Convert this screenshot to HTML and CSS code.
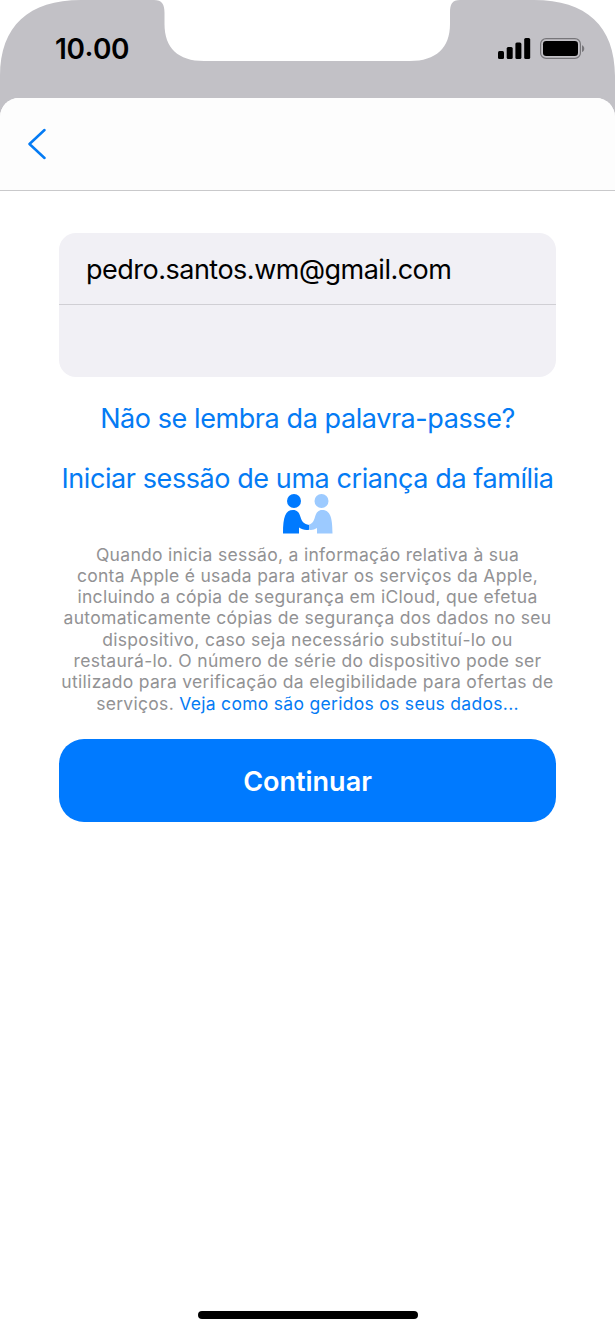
FILE: index.html
```html
<!DOCTYPE html>
<html lang="pt">
<head>
    <meta charset="UTF-8">
    <meta name="viewport" content="width=device-width, initial-scale=1.0">
    <title>Iniciar sessão</title>
    <link rel="stylesheet" href="styles.css">
</head>
<body>
    <div class="phone">
        <div class="status-bar">
            <svg class="status-shape" width="615" height="130" viewBox="0 0 615 130">
                <path fill="#c2c1c6" d="M0 130V76C0 26 29 0 81 0H154C162 0 164.500 4 164.500 13V24C164.500 48 178 61 204 61H410C436 61 450 48 450 24V13C450 4 452 0 460 0H534C586 0 615 26 615 76V130Z"/>
            </svg>
            <span class="time">10<span class="dot">.</span>00</span>
            <svg class="status-icons" width="88" height="22" viewBox="0 0 88 22">
                <rect x="0" y="13" width="6" height="8" rx="1.500"/>
                <rect x="8.700" y="9" width="6" height="12" rx="1.500"/>
                <rect x="17.400" y="4.500" width="6" height="16.500" rx="1.500"/>
                <rect x="26.200" y="0" width="6" height="21" rx="1.500"/>
                <rect x="42.600" y="0.600" width="39.800" height="19.800" rx="5.500" fill="none" stroke="#77767a" stroke-width="1.200"/>
                <rect x="45" y="3" width="35" height="15" rx="3.200"/>
                <path d="M84 7.200c3 1.200 3 5.600 0 6.800z" fill="#77767a"/>
            </svg>
        </div>
        <div class="sheet">
            <div class="nav-bar">
                <svg class="back" width="20" height="32" viewBox="0 0 20 32">
                    <path d="M16.500 2L1.500 16L16.500 30" fill="none" stroke="#047bf4" stroke-width="2.500" stroke-linecap="round" stroke-linejoin="round"/>
                </svg>
            </div>
            <div class="content">
                <div class="fields">
                    <div class="field email">pedro.santos.wm@gmail.com</div>
                    <div class="field"></div>
                </div>
                <a class="link forgot">Não se lembra da palavra-passe?</a>
                <a class="link child">Iniciar sessão de uma criança da família</a>
                <svg class="people" width="50" height="40" viewBox="0 0 50 40">
                    <g fill="#9ccaff">
                        <circle cx="38.500" cy="7" r="7"/>
                        <path d="M25 31C29 30 30.500 28 32 23C33.500 18 35.500 16 39 16C47 16 49.500 23 49.500 39.500H34V34C31 36 28 36.500 24.500 35.500Z"/>
                    </g>
                    <g fill="#007aff">
                        <circle cx="11" cy="7" r="7"/>
                        <path d="M0 39.500C0 23 2.500 16 10 16C14 16 16 18 17.500 23C19 28 21 30 26 31V35.800C22 36.500 19 35.500 16 33.500V39.500Z"/>
                    </g>
                </svg>
                <p class="info">
                    Quando inicia sessão, a informação relativa à sua<br>
                    conta Apple é usada para ativar os serviços da Apple,<br>
                    incluindo a cópia de segurança em iCloud, que efetua<br>
                    automaticamente cópias de segurança dos dados no seu<br>
                    dispositivo, caso seja necessário substituí-lo ou<br>
                    restaurá-lo. O número de série do dispositivo pode ser<br>
                    utilizado para verificação da elegibilidade para ofertas de<br>
                    serviços. <a>Veja como são geridos os seus dados...</a>
                </p>
                <button class="btn">Continuar</button>
            </div>
            <div class="home-bar"></div>
        </div>
    </div>
</body>
</html>
```
FILE: styles.css
```css
* {
    box-sizing: border-box;
}
body {
    margin: 0;
    background: #fff;
    font-family: Inter, "Liberation Sans", sans-serif;
    color: #000;
}
.phone {
    width: 615px;
    height: 1332px;
    display: flex;
    flex-direction: column;
    position: relative;
    overflow: hidden;
}
.status-bar {
    height: 98px;
    display: flex;
    justify-content: space-between;
    align-items: flex-start;
    padding: 32px 29px 0 55px;
}
.status-shape {
    position: absolute;
    top: 0;
    left: 0;
}
.time {
    position: relative;
    font-size: 28px;
    line-height: 34px;
    font-weight: 600;
    letter-spacing: -0.4px;
}
.dot {
    display: inline-block;
    transform: translateY(-3px);
}
.status-icons {
    position: relative;
    margin-top: 6px;
}
.sheet {
    position: relative;
    flex: 1;
    display: flex;
    flex-direction: column;
    background: #fff;
    border-radius: 19px 19px 0 0;
    overflow: hidden;
}
.nav-bar {
    height: 93px;
    background: #fdfdfd;
    border-bottom: 1px solid #c9c9cb;
    padding: 30px 0 0 28px;
}
.back {
    display: block;
}
.content {
    flex: 1;
    display: flex;
    flex-direction: column;
    align-items: center;
    padding: 42px 59px 0;
}
.fields {
    width: 497px;
    height: 144px;
    background: #f1f0f5;
    border-radius: 17px;
    overflow: hidden;
}
.field {
    height: 72px;
    padding: 0 27px;
    font-size: 27px;
    line-height: 73px;
    letter-spacing: -0.5px;
}
.email {
    border-bottom: 1px solid #d0cfd4;
}
.link {
    color: #047bf4;
    font-size: 27px;
    line-height: 34px;
    letter-spacing: -0.42px;
    white-space: nowrap;
}
.forgot {
    margin-top: 25px;
}
.child {
    margin-top: 26px;
}
.people {
    display: block;
    margin-top: -2px;
}
.info {
    margin: 9.6px 0 0;
    color: #929294;
    font-size: 17.5px;
    line-height: 21.3px;
    letter-spacing: 0.3px;
    text-align: center;
    white-space: nowrap;
}
.info a {
    color: #047bf4;
}
.btn {
    width: 497px;
    height: 83px;
    margin-top: 25.4px;
    padding: 2px 0 0;
    border: 0;
    border-radius: 25px;
    background: #007aff;
    color: #fff;
    font-family: inherit;
    font-size: 27px;
    font-weight: 600;
}
.home-bar {
    width: 220px;
    height: 8px;
    margin: 0 auto 13px;
    border-radius: 4px;
    background: #000;
}
```
